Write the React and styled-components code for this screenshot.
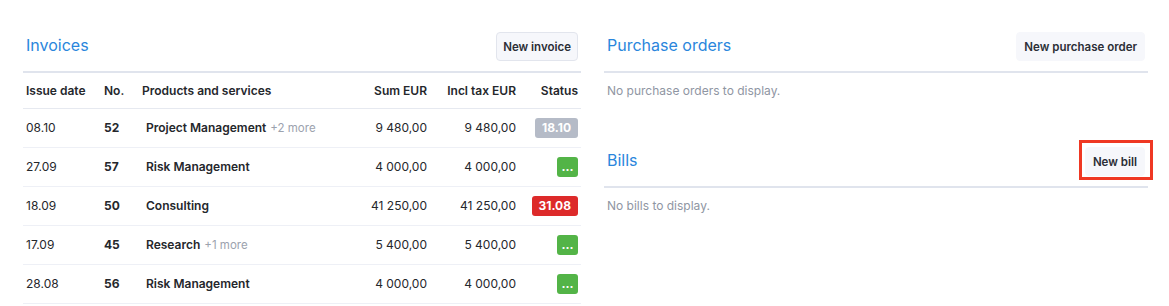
import React from 'react';
import styled, { createGlobalStyle } from 'styled-components';

const INVOICES = [
    { date: '08.10', no: '52', product: 'Project Management', more: '+2 more', sum: '9 480,00', tax: '9 480,00', status: '18.10', kind: 'gray' },
    { date: '27.09', no: '57', product: 'Risk Management', sum: '4 000,00', tax: '4 000,00', status: '...', kind: 'green' },
    { date: '18.09', no: '50', product: 'Consulting', sum: '41 250,00', tax: '41 250,00', status: '31.08', kind: 'red' },
    { date: '17.09', no: '45', product: 'Research', more: '+1 more', sum: '5 400,00', tax: '5 400,00', status: '...', kind: 'green' },
    { date: '28.08', no: '56', product: 'Risk Management', sum: '4 000,00', tax: '4 000,00', status: '...', kind: 'green' }
];

const BADGE_COLORS = {
    gray: '#b5bbc7',
    green: '#53b447',
    red: '#dd2a2a'
};

// column widths add up to the 558px of the invoices panel
const COLUMNS = [78, 38, 211, 80, 89, 62];

export default () => (
    <>
        <GlobalStyle />
        <Page>
            <Section>
                <Header>
                    <Title>Invoices</Title>
                    <Button bordered>New invoice</Button>
                </Header>
                <Table>
                    <colgroup>
                        {COLUMNS.map((width, i) => (
                            <col key={i} style={{ width }} />
                        ))}
                    </colgroup>
                    <thead>
                        <tr>
                            <Th>Issue date</Th>
                            <Th>No.</Th>
                            <Th>Products and services</Th>
                            <Th align="right">Sum EUR</Th>
                            <Th align="right">Incl tax EUR</Th>
                            <Th align="right">Status</Th>
                        </tr>
                    </thead>
                    <tbody>
                        {INVOICES.map(row => (
                            <tr key={row.no}>
                                <Td>{row.date}</Td>
                                <Td bold>{row.no}</Td>
                                <ProductCell>
                                    <strong>{row.product}</strong>
                                    {row.more && <More>{row.more}</More>}
                                </ProductCell>
                                <Td align="right">{row.sum}</Td>
                                <Td align="right">{row.tax}</Td>
                                <Td align="right">
                                    <Badge kind={row.kind} compact={row.status === '...'}>
                                        {row.status}
                                    </Badge>
                                </Td>
                            </tr>
                        ))}
                    </tbody>
                </Table>
            </Section>
            <Column>
                <Section>
                    <Header>
                        <Title>Purchase orders</Title>
                        <Button>New purchase order</Button>
                    </Header>
                    <Empty>No purchase orders to display.</Empty>
                </Section>
                <Section>
                    <Header>
                        <Title>Bills</Title>
                        <Highlighted>
                            <Button>New bill</Button>
                        </Highlighted>
                    </Header>
                    <Empty>No bills to display.</Empty>
                </Section>
            </Column>
        </Page>
    </>
);

const GlobalStyle = createGlobalStyle`
    body {
        margin: 0;
        background: #ffffff;
        font-family: Inter, "Noto Sans", sans-serif;
        color: #25272c;
    }
`;

const Page = styled.div`
    display: grid;
    grid-template-columns: 558px 544px;
    column-gap: 23px;
    padding: 32px 21px 0 23px;
    align-items: start;
`;

const Column = styled.div`
    display: flex;
    flex-direction: column;
    gap: 39px;
`;

const Section = styled.section`
    display: flex;
    flex-direction: column;
`;

const Header = styled.div`
    display: flex;
    justify-content: space-between;
    align-items: center;
    height: 29px;
    padding: 0 3px 10px 3px;
    border-bottom: 2px solid #e0e4ed;
`;

const Title = styled.h2`
    margin: 0 0 4px 0;
    font-size: 16px;
    font-weight: 400;
    color: #2a86dc;
`;

const Button = styled.button`
    height: 29px;
    padding: ${props => (props.bordered ? '0 6px' : '0 7px')};
    font-family: inherit;
    font-size: 11.5px;
    font-weight: 600;
    color: #2b2e36;
    background: #f6f7fb;
    border: 1px solid ${props => (props.bordered ? '#e2e5ed' : '#f6f7fb')};
    border-radius: 4px;
    cursor: pointer;
`;

const Highlighted = styled.div`
    position: relative;
    display: flex;

    &::after {
        content: '';
        position: absolute;
        left: -6px;
        right: -8px;
        top: -7px;
        bottom: -4px;
        border: 3px solid #ef3823;
        pointer-events: none;
    }
`;

const Table = styled.table`
    width: 100%;
    table-layout: fixed;
    border-collapse: collapse;
    font-size: 12px;

    tbody tr {
        height: 39px;
        border-bottom: 1px solid #eef0f6;
    }

    thead tr {
        height: 35px;
        border-bottom: 1px solid #e6e9f0;
    }
`;

const Th = styled.th`
    padding: 0 3px;
    text-align: ${props => props.align || 'left'};
    font-weight: 600;
    color: #25272c;
    white-space: nowrap;
`;

const Td = styled.td`
    padding: 0 3px;
    text-align: ${props => props.align || 'left'};
    font-weight: ${props => (props.bold ? 700 : 400)};
    white-space: nowrap;
`;

const ProductCell = styled.td`
    padding: 0 3px 0 7px;
    white-space: nowrap;

    strong {
        font-weight: 600;
    }
`;

const More = styled.span`
    margin-left: 4px;
    font-size: 11.5px;
    color: #9ca2ae;
`;

const Badge = styled.span`
    display: inline-flex;
    align-items: center;
    justify-content: center;
    width: ${props => (props.compact ? '21px' : 'auto')};
    height: 20px;
    padding: ${props => (props.compact ? '0' : '0 7px')};
    box-sizing: border-box;
    border-radius: 3px;
    background: ${props => BADGE_COLORS[props.kind]};
    color: #ffffff;
    font-size: 12px;
    font-weight: 700;
    vertical-align: middle;
`;

const Empty = styled.p`
    margin: 0;
    padding: 10px 3px;
    font-size: 12px;
    line-height: 15px;
    color: #8f96a3;
`;
